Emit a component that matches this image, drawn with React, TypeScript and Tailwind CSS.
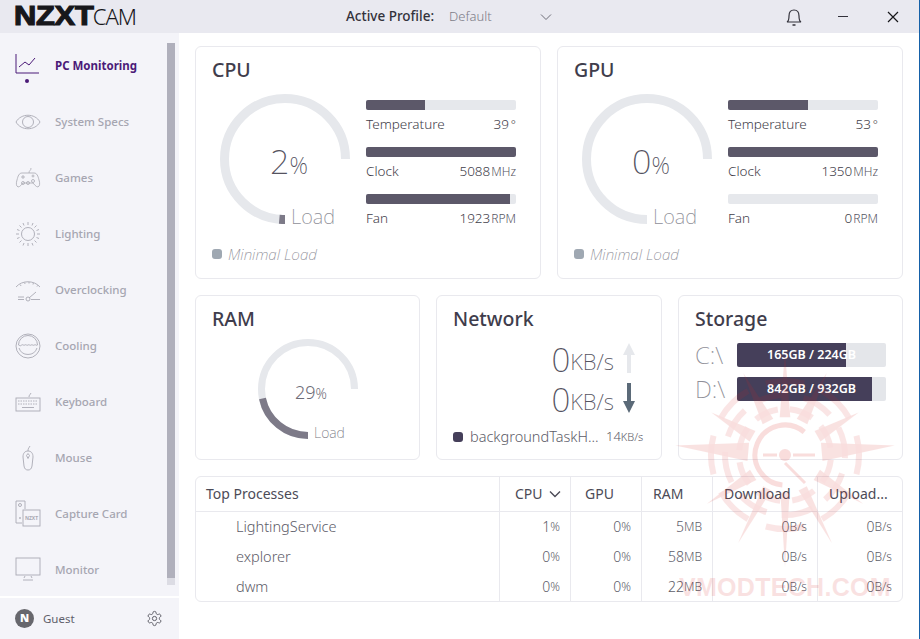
import type { ReactNode } from "react";

const polar = (cx: number, cy: number, r: number, deg: number) => {
  const a = (deg * Math.PI) / 180;
  return [cx + r * Math.cos(a), cy + r * Math.sin(a)];
};

// angles in svg degrees, 0 = 3 o'clock, drawn clockwise
const arc = (cx: number, cy: number, r: number, from: number, to: number) => {
  const [x1, y1] = polar(cx, cy, r, from);
  const [x2, y2] = polar(cx, cy, r, to);
  return `M${x1} ${y1}A${r} ${r} 0 ${to - from > 180 ? 1 : 0} 1 ${x2} ${y2}`;
};

function Gauge({ size, stroke, value }: { size: number; stroke: number; value: number }) {
  const c = size / 2;
  const r = c - stroke / 2;
  return (
    <svg width={size} height={size} viewBox={`0 0 ${size} ${size}`} fill="none">
      <path d={arc(c, c, r, 90, 360)} stroke="#e6e8ec" strokeWidth={stroke} />
      <path d={arc(c, c, r, 90, 90 + value * 2.7)} stroke="#7d7a88" strokeWidth={stroke} />
    </svg>
  );
}

const icon = "h-7 w-7 text-[#a9a9b3]";

const navItems: { label: string; svg: ReactNode }[] = [
  {
    label: "PC Monitoring",
    svg: (
      <svg viewBox="0 0 26 28" className="h-7 w-[26px] text-[#4b1a78]" fill="none" stroke="currentColor" strokeWidth="1">
        <path d="M2 2v19h23" />
        <path d="M5 15l6-5 4 3 6-7" />
      </svg>
    ),
  },
  {
    label: "System Specs",
    svg: (
      <svg viewBox="0 0 26 28" className={icon} fill="none" stroke="currentColor" strokeWidth=".9">
        <path d="M1 14C6 5 20 5 25 14C20 23 6 23 1 14Z" />
        <circle cx="13" cy="14" r="5.500" />
      </svg>
    ),
  },
  {
    label: "Games",
    svg: (
      <svg viewBox="0 0 26 28" className={icon} fill="none" stroke="currentColor" strokeWidth=".8">
        <path d="M14 9c0-3 2-2 2-5" />
        <path d="M7 9h12c3 0 4 3 5 7 1 3 1 6-1 7-2 0-4-3-5-4H8c-1 1-3 4-5 4-2-1-2-4-1-7 1-4 2-7 5-7Z" />
        <path d="M6 13h4M8 11v4" />
        <circle cx="18" cy="12" r="1" />
        <circle cx="8" cy="19" r="1.500" />
        <circle cx="13" cy="19" r="1.500" />
        <circle cx="18" cy="17" r="1.500" />
      </svg>
    ),
  },
  {
    label: "Lighting",
    svg: (
      <svg viewBox="0 0 26 28" className={icon} fill="none" stroke="currentColor" strokeWidth=".9">
        <circle cx="13" cy="14" r="6.500" />
        <path d="M13 2v3M13 23v3M1 14h3M22 14h3M4.500 5.500l2 2M19.500 20.500l2 2M21.500 5.500l-2 2M6.500 20.500l-2 2M8 3l1 2.500M17 23l1 2.500M18 3l-1 2.500M9 23l-1 2.500M2 9.500l2.500 1M21.500 17.500l2.500 1M24 9.500l-2.500 1M4.500 17.500l-2.500 1" />
      </svg>
    ),
  },
  {
    label: "Overclocking",
    svg: (
      <svg viewBox="0 0 26 28" className={icon} fill="none" stroke="currentColor" strokeWidth=".9">
        <path d="M1 11C7 4 19 4 25 11" />
        <path d="M6 10l-1-2M10 8l-.5-2M14 7.500V6M18 8.500l.5-2M22 10.500l1-1.500" strokeDasharray="1.500 1" />
        <path d="M3 21h6M3 23.500h6M16 23.500h9M14 22l7-6" />
        <circle cx="13" cy="23" r="2" />
      </svg>
    ),
  },
  {
    label: "Cooling",
    svg: (
      <svg viewBox="0 0 26 28" className={icon} fill="none" stroke="currentColor" strokeWidth=".9">
        <circle cx="13" cy="14" r="12" />
        <path d="M3.500 13c2 1 2 1 3.200 0s2 1 3.100 0 2 1 3.200 0 2 1 3.100 0 2 1 3.200 0 2 1 3.200 0" />
        <path d="M3.500 13a9.500 9.500 0 0 1 19 0M4 16a9.500 9.500 0 0 0 18 0" />
      </svg>
    ),
  },
  {
    label: "Keyboard",
    svg: (
      <svg viewBox="0 0 26 28" className={icon} fill="none" stroke="currentColor" strokeWidth=".9">
        <path d="M14 9c0-2 1-2 2-4" />
        <rect x="1" y="10" width="24" height="13" />
        <path d="M3 13h20M3 16h20" strokeDasharray="1.500 1" />
        <path d="M7 19.500h12" />
      </svg>
    ),
  },
  {
    label: "Mouse",
    svg: (
      <svg viewBox="0 0 26 28" className={icon} fill="none" stroke="currentColor" strokeWidth=".9">
        <path d="M13 7c0-3 1-3 2-5" />
        <path d="M13 7c-3 0-5 2-5 6l1 9c.5 3 2 4 4 4s3.500-1 4-4l1-9c0-4-2-6-5-6Z" />
        <path d="M13 9.500l-1.500 2 1.500 3 1.500-3Z" />
      </svg>
    ),
  },
  {
    label: "Capture Card",
    svg: (
      <svg viewBox="0 0 26 28" className={icon} fill="none" stroke="currentColor" strokeWidth=".9">
        <path d="M7 23H1V1h9v8" />
        <circle cx="5" cy="5" r="1.500" />
        <circle cx="5" cy="18" r=".6" />
        <rect x="8" y="10" width="17" height="16" />
        <text x="16.500" y="20" textAnchor="middle" fontSize="5" fontWeight="700" fill="currentColor" stroke="none">
          NZXT
        </text>
      </svg>
    ),
  },
  {
    label: "Monitor",
    svg: (
      <svg viewBox="0 0 26 28" className={icon} fill="none" stroke="currentColor" strokeWidth=".9">
        <rect x="1" y="2" width="24" height="17" />
        <path d="M9 22l1-2M17 22l-1-2M8 24h10" />
      </svg>
    ),
  },
];

function Sidebar() {
  return (
    <aside className="flex w-[179px] flex-col bg-[#f4f4f9]">
      <div className="flex h-[563px]">
        <nav className="flex-1 overflow-hidden pt-[5px]">
          {navItems.map((item, i) => (
            <div key={item.label} className="relative flex h-14 items-center pl-[14px]">
              <span className="flex w-[41px] shrink-0">{item.svg}</span>
              <span
                className={
                  i === 0
                    ? "text-[11.500px] font-bold text-[#4b1a78]"
                    : "text-[11.500px] font-medium text-[#a6a6b1]"
                }
              >
                {item.label}
              </span>
              {i === 0 && <span className="absolute left-[25px] top-[41px] h-1 w-1 rounded-full bg-[#4b1a78]" />}
            </div>
          ))}
        </nav>
        <div className="mr-1 mt-[10px] h-[542px] w-2 bg-[#dcdce4]">
          <div className="h-[535px] bg-[#b0b0bc]" />
        </div>
      </div>
      <div className="flex h-[43px] items-center border-t-2 border-white pl-[15px] pr-4">
        <span className="flex h-[19px] w-[19px] items-center justify-center rounded-full bg-[#67676d] text-[11px] font-black text-white">
          N
        </span>
        <span className="ml-[9px] flex-1 text-[11.500px] text-[#5f5f6b]">Guest</span>
        <svg viewBox="0 0 24 24" className="h-[17px] w-[17px] text-[#55555f]" fill="none" stroke="currentColor" strokeWidth="1.300">
          <path d="M12.220 2h-.44a2 2 0 0 0-2 2v.18a2 2 0 0 1-1 1.730l-.43.250a2 2 0 0 1-2 0l-.15-.080a2 2 0 0 0-2.730.730l-.22.380a2 2 0 0 0 .730 2.730l.15.100a2 2 0 0 1 1 1.720v.510a2 2 0 0 1-1 1.740l-.15.090a2 2 0 0 0-.730 2.730l.22.380a2 2 0 0 0 2.730.730l.15-.080a2 2 0 0 1 2 0l.43.250a2 2 0 0 1 1 1.730V20a2 2 0 0 0 2 2h.44a2 2 0 0 0 2-2v-.18a2 2 0 0 1 1-1.730l.43-.250a2 2 0 0 1 2 0l.15.080a2 2 0 0 0 2.730-.730l.22-.390a2 2 0 0 0-.730-2.730l-.15-.080a2 2 0 0 1-1-1.740v-.500a2 2 0 0 1 1-1.740l.15-.090a2 2 0 0 0 .730-2.730l-.22-.380a2 2 0 0 0-2.730-.730l-.15.080a2 2 0 0 1-2 0l-.43-.250a2 2 0 0 1-1-1.730V4a2 2 0 0 0-2-2z" />
          <circle cx="12" cy="12" r="3" />
        </svg>
      </div>
    </aside>
  );
}

function TitleBar() {
  return (
    <header className="flex h-[33px] items-center bg-[#e9e9f0] text-[#33323b]">
      <div className="flex w-[331px] items-baseline pl-[14px] leading-none text-[#17171b]">
        <span className="origin-left scale-x-[1.14] font-['Liberation_Sans'] text-[27px] font-bold tracking-[-0.2px] [-webkit-text-stroke:1.200px_#17171b]">NZXT</span>
        <span className="ml-[9px] text-[22px] font-light tracking-[-1px]">CAM</span>
      </div>
      <span className="ml-[15px] text-[13.500px] font-medium">Active Profile:</span>
      <span className="ml-[15px] text-[13px] font-light text-[#7d7d88]">Default</span>
      <svg viewBox="0 0 12 8" className="ml-[48px] h-2 w-3 text-[#6d6d78]" fill="none" stroke="currentColor">
        <path d="M1 1.500l5 5 5-5" />
      </svg>
      <svg viewBox="0 0 18 20" className="ml-[233px] h-5 w-[18px]" fill="none" stroke="currentColor" strokeWidth="1.200">
        <path d="M2 15c2-1 2-3 2-6 0-4 2-6 5-6s5 2 5 6c0 3 0 5 2 6Z" />
        <path d="M7.500 18h3" strokeWidth="1.500" />
      </svg>
      <span className="ml-[35px] h-px w-[10px] bg-[#33323b]" />
      <svg viewBox="0 0 12 12" className="ml-[39px] h-3 w-3 text-[#17171b]" fill="none" stroke="currentColor" strokeWidth="1.200">
        <path d="M1 1l10 10M11 1L1 11" />
      </svg>
    </header>
  );
}

function Card({ title, className, children }: { title: string; className: string; children: ReactNode }) {
  return (
    <section className={`rounded-md border border-[#e9e9ee] bg-white ${className}`}>
      <h2 className="pl-4 pt-[9px] text-[19.500px] font-medium leading-7 text-[#3f3d4c]">{title}</h2>
      {children}
    </section>
  );
}

function Meter({ label, pct, value, unit }: { label: string; pct: number; value: string; unit: string }) {
  return (
    <div className="h-[47px]">
      <div className="h-[10px] w-[150px] overflow-hidden rounded-[2px] bg-[#e6e8ec]">
        <div className="h-full bg-[#5c5869]" style={{ width: `${pct}%` }} />
      </div>
      <div className="mt-[4px] flex items-baseline justify-between text-[13.500px] font-light leading-[20px] text-[#3f3e4a]">
        <span>{label}</span>
        <span>
          {value}
          <span className={unit === "°" ? "ml-0.5 text-xs" : "ml-px text-xs text-[#55545f]"}>{unit}</span>
        </span>
      </div>
    </div>
  );
}

function ChipCard({
  title,
  load,
  meters,
}: {
  title: string;
  load: number;
  meters: { label: string; pct: number; value: string; unit: string }[];
}) {
  return (
    <Card title={title} className="h-[233px] w-[346px]">
      <div className="flex pl-6 pt-[10px]">
        <div className="relative h-[130px] w-[130px]">
          <Gauge size={130} stroke={9} value={load} />
          <div className="absolute left-[50px] top-[47px] font-extralight leading-[40px] text-[#55535f]">
            <span className="text-[34px]">{load}</span>
            <span className="text-[23px]">%</span>
          </div>
          <span className="absolute left-[71px] top-[109px] text-xl font-extralight text-[#8f8f98]">Load</span>
        </div>
        <div className="ml-4 mt-[6px]">
          {meters.map((m) => (
            <Meter key={m.label} {...m} />
          ))}
        </div>
      </div>
      <div className="ml-4 mt-[2px] flex items-center">
        <span className="h-[10px] w-[10px] rounded-[3px] bg-[#9fa8b2]" />
        <span className="ml-[6px] text-[15.200px] font-extralight italic text-[#8d8d96]">Minimal Load</span>
      </div>
    </Card>
  );
}

function NetRow({ up }: { up: boolean }) {
  return (
    <div className="flex h-10 items-center justify-end pr-[25px] font-extralight text-[#55535f]">
      <span className="mt-[2px] text-[33px] leading-none">0</span>
      <span className="mt-[6px] text-[22px] leading-none">KB/s</span>
      <svg viewBox="0 0 14 30" className="ml-[8px] h-[30px] w-[14px]" fill={up ? "#e6e8ec" : "#5b6a78"}>
        <path d={up ? "M7 0l6 12H9v18H5V12H1Z" : "M5 0h4v18h4l-6 12-6-12h4Z"} />
      </svg>
    </div>
  );
}

function Drive({ name, pct, text }: { name: string; pct: number; text: string }) {
  return (
    <div className="flex h-[34px] items-center">
      <span className="w-[42px] text-2xl font-extralight text-[#8f8f98]">{name}</span>
      <div className="relative h-6 w-[149px] overflow-hidden rounded-[2px] bg-[#e4e6ea]">
        <div className="h-full bg-[#453f5a]" style={{ width: `${pct}%` }} />
        <span className="absolute inset-0 flex items-center justify-center text-[12.500px] font-semibold text-white">
          {text}
        </span>
      </div>
    </div>
  );
}

const columns = "grid grid-cols-[303px_71px_71px_71px_105px_85px]";
const rows = [
  ["LightingService", "1", "0", "5", "0", "0"],
  ["explorer", "0", "0", "58", "0", "0"],
  ["dwm", "0", "0", "22", "0", "0"],
];
const units = ["%", "%", "MB", "B/s", "B/s"];

function Processes() {
  return (
    <section className="h-[126px] w-[708px] rounded-md border border-[#e9e9ee] text-[#5d5c68]">
      <div className={`${columns} h-[35px] items-stretch border-b border-[#e9e9ee] text-sm text-[#4c4b57]`}>
        <span className="flex items-center pl-[10px]">Top Processes</span>
        <span className="flex items-center border-l border-[#e9e9ee] pl-[15px]">
          CPU
          <svg viewBox="0 0 12 8" className="ml-[6px] h-2 w-3" fill="none" stroke="currentColor" strokeWidth="1.400">
            <path d="M1 1.500l5 5 5-5" />
          </svg>
        </span>
        <span className="flex items-center border-l border-[#e9e9ee] pl-[14px]">GPU</span>
        <span className="flex items-center border-l border-[#e9e9ee] pl-[11px]">RAM</span>
        <span className="flex items-center border-l border-[#e9e9ee] pl-[11px]">Download</span>
        <span className="flex items-center border-l border-[#e9e9ee] pl-[11px]">Upload...</span>
      </div>
      {rows.map(([name, ...vals]) => (
        <div key={name} className={`${columns} h-[30px] items-stretch`}>
          <span className="flex items-center pl-10 text-[14.500px] font-light">{name}</span>
          {vals.map((v, i) => (
            <span
              key={i}
              className="flex items-center justify-end border-l border-[#e9e9ee] pr-[10px] text-sm font-light"
            >
              {v}
              <span className="text-xs">{units[i]}</span>
            </span>
          ))}
        </div>
      ))}
    </section>
  );
}

function Watermark() {
  const cx = 785;
  const cy = 455;
  // ray: angle, tip radius, half width of its base in degrees
  const rays = [
    [-90, 103, 8],
    [-63, 92, 9],
    [-117, 92, 9],
    [-30, 85, 9],
    [-150, 85, 9],
    [-5, 110, 14],
    [185, 110, 14],
    [32, 92, 9],
    [148, 92, 9],
    [62, 100, 7],
    [118, 100, 7],
    [90, 112, 7],
  ];
  return (
    <div className="pointer-events-none absolute inset-0 overflow-hidden">
      <svg width="920" height="639" viewBox="0 0 920 639" fill="none" className="opacity-[0.15]">
        <circle cx={cx} cy={cy} r="6" fill="#d8231f" />
        <path d={`M${cx + 8} ${cy}h22M${cx - 8} ${cy}h-14M${cx} ${cy + 8}l20 20`} stroke="#d8231f" strokeWidth="3" />
        <path d={arc(cx, cy, 30, 95, 310)} stroke="#d8231f" strokeWidth="5" />
        <g opacity=".75">
          {[46, 60, 74].map((r, n) =>
            [0, 1, 2, 3, 4, 5, 6, 7].map((k) => (
              <path
                key={`${r}-${k}`}
                d={arc(cx, cy, r, k * 45 + 6 + n * 12, k * 45 + 36 + n * 12)}
                stroke="#d8231f"
                strokeWidth="6"
              />
            )),
          )}
        </g>
        {rays.map(([a, tip, w]) => {
          const [x, y] = polar(cx, cy, tip, a);
          const [lx, ly] = polar(cx, cy, 38, a - w);
          const [rx, ry] = polar(cx, cy, 38, a + w);
          return <path key={a} d={`M${lx} ${ly}L${x} ${y}L${rx} ${ry}Z`} fill="#d8231f" opacity=".85" />;
        })}
      </svg>
      <span className="absolute left-[679px] top-[572px] font-['Liberation_Sans'] text-[25px] font-bold leading-[30px] tracking-[0.3px] text-[#d8231f] opacity-[0.13]">
        VMODTECH.COM
      </span>
    </div>
  );
}

export default function App() {
  return (
    <div className="relative h-[639px] w-[920px] overflow-hidden border-r border-[#1560a8] bg-white font-['Noto_Sans',sans-serif]">
      <TitleBar />
      <div className="flex h-[606px]">
        <Sidebar />
        <main className="flex flex-1 flex-col gap-4 pl-4 pt-[13px]">
          <div className="flex gap-4">
            <ChipCard
              title="CPU"
              load={2}
              meters={[
                { label: "Temperature", pct: 39, value: "39", unit: "°" },
                { label: "Clock", pct: 100, value: "5088", unit: "MHz" },
                { label: "Fan", pct: 96, value: "1923", unit: "RPM" },
              ]}
            />
            <ChipCard
              title="GPU"
              load={0}
              meters={[
                { label: "Temperature", pct: 53, value: "53", unit: "°" },
                { label: "Clock", pct: 100, value: "1350", unit: "MHz" },
                { label: "Fan", pct: 0, value: "0", unit: "RPM" },
              ]}
            />
          </div>
          <div className="flex gap-4">
            <Card title="RAM" className="h-[165px] w-[225px]">
              <div className="relative ml-[62px] mt-[6px] h-[100px] w-[100px]">
                <Gauge size={100} stroke={7} value={29} />
                <div className="absolute left-[37px] top-[39px] font-light leading-[26px] text-[#6d6c77]">
                  <span className="text-lg">29</span>
                  <span className="text-sm">%</span>
                </div>
                <span className="absolute left-[56px] top-[84px] text-sm font-extralight text-[#77777f]">Load</span>
              </div>
            </Card>
            <Card title="Network" className="h-[165px] w-[226px]">
              <div className="pt-[5px]">
                <NetRow up />
                <NetRow up={false} />
              </div>
              <div className="mt-2 flex items-center pl-4 font-light text-[#5d5c68]">
                <span className="h-[10px] w-[10px] rounded-[3px] bg-[#453f5a]" />
                <span className="ml-[7px] w-[136px] text-[14.500px]">backgroundTaskH...</span>
                <span className="text-[13px]">
                  14<span className="text-[11px]">KB/s</span>
                </span>
              </div>
            </Card>
            <Card title="Storage" className="h-[165px] w-[225px]">
              <div className="pl-4 pt-[5px]">
                <Drive name="C:\" pct={73} text="165GB / 224GB" />
                <Drive name="D:\" pct={90.500} text="842GB / 932GB" />
              </div>
            </Card>
          </div>
          <Processes />
        </main>
      </div>
      <Watermark />
    </div>
  );
}
